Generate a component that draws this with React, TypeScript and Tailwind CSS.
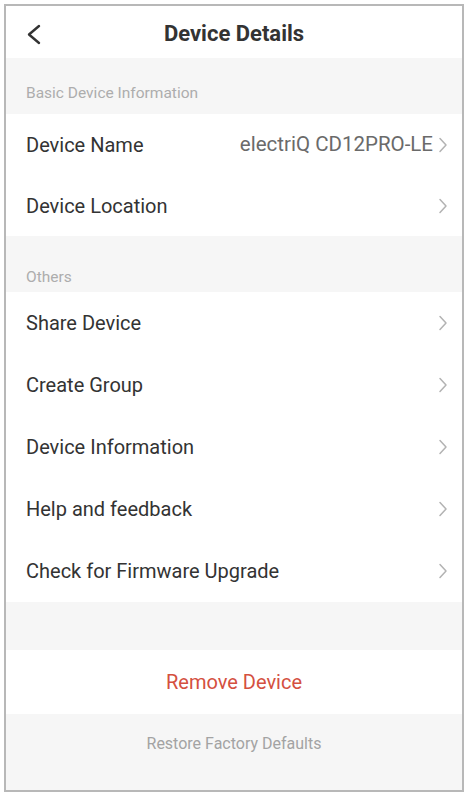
import React from 'react';

const Chevron: React.FC = () => (
  <svg width="10" height="18" viewBox="0 0 10 18" className="shrink-0">
    <path d="M2 2.5l6 6.5-6 6.5" fill="none" stroke="#b3b3b3" strokeWidth="1.5" strokeLinecap="round" strokeLinejoin="round" />
  </svg>
);

const SectionHeader: React.FC<{ title: string; className?: string }> = ({ title, className = '' }) => (
  <div className={`h-[56px] bg-[#f6f6f6] px-[20px] flex items-end text-[15.5px] text-[#adadad] ${className}`}>
    {title}
  </div>
);

const Row: React.FC<{ label: string; value?: string; className?: string }> = ({ label, value, className = 'h-[61px]' }) => (
  <div className={`flex items-center justify-between pl-[20px] pr-[14px] bg-white ${className}`}>
    <span className="text-[20px] text-[#333333]">{label}</span>
    <div className="flex items-center gap-[5px]">
      {value && <span className="text-[20.5px] text-[#6a6a6a]">{value}</span>}
      <Chevron />
    </div>
  </div>
);

const others = ['Share Device', 'Create Group', 'Device Information', 'Help and feedback', 'Check for Firmware Upgrade'];

export default function App() {
  return (
    <div className="w-[468px] h-[795px] bg-white p-[4px]" style={{ fontFamily: 'Roboto, "Noto Sans", sans-serif' }}>
      <div className="h-[788px] border-2 border-[#b8b8b8] flex flex-col overflow-hidden">
        {/* top bar */}
        <div className="h-[52px] relative flex items-center justify-center bg-white">
          <svg width="16" height="22" viewBox="0 0 16 22" className="absolute left-[20px] top-[18px]">
            <path d="M13 2L3 10.5 13 19" fill="none" stroke="#333" strokeWidth="2.4" strokeLinecap="round" strokeLinejoin="round" />
          </svg>
          <span className="text-[22px] font-bold text-[#333333] pt-[2px]">Device Details</span>
        </div>

        <SectionHeader title="Basic Device Information" className="pb-[9px]" />
        <Row label="Device Name" value="electriQ CD12PRO-LE" />
        <Row label="Device Location" />

        <SectionHeader title="Others" className="pb-[3px]" />
        {others.map((label) => (
          <Row key={label} label={label} className="h-[62px]" />
        ))}

        <div className="h-[48px] bg-[#f6f6f6]" />
        <div className="h-[64px] flex items-center justify-center bg-white">
          <span className="text-[20px] text-[#d4503f]">Remove Device</span>
        </div>
        <div className="flex-1 bg-[#f6f6f6] flex items-start justify-center pt-[18px]">
          <span className="text-[16px] text-[#a3a3a3]">Restore Factory Defaults</span>
        </div>
      </div>
    </div>
  );
}
